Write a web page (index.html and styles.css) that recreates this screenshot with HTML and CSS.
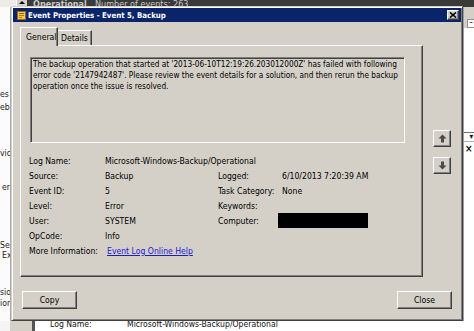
FILE: index.html
```html
<!DOCTYPE html>
<html>
<head>
<meta charset="utf-8">
<title>Event Properties - Event 5, Backup</title>
<link rel="stylesheet" href="styles.css">
</head>
<body>
<div class="screen">
  <div class="bg-top">
    <div class="bg-top-left"></div>
    <div class="scroll-btn"><span class="scroll-arrow"></span></div>
    <div class="bg-top-bar"><span class="bg-op">Operational</span><span class="bg-count">Number of events: 263</span></div>
  </div>
  <div class="bg-middle">
    <div class="bg-left">
      <div class="frag f1">es L</div>
      <div class="frag f2">eb S</div>
      <div class="frag f3">vice</div>
      <div class="frag f4">erv</div>
      <div class="frag f5">Ser</div>
      <div class="frag f6">Exq</div>
      <div class="frag f7">sion</div>
      <div class="frag f8">ion</div>
    </div>
    <div class="bg-left-edge"></div>
    <div class="bg-center"></div>
    <div class="bg-right">
      <div class="bgr-top"><span class="bgr-min">&#8211;</span></div>
      <div class="bgr-white"></div>
      <div class="bgr-drop">&#9662;</div>
      <div class="bgr-x">&#215;</div>
      <div class="bgr-rest"></div>
    </div>
  </div>
  <div class="bg-bottom">
    <div class="bgb-white"></div>
    <div class="bgb-gray"></div>
    <div class="bgb-dark"></div>
    <div class="bgb-row"><span class="bgb-label">Log Name:</span><span>Microsoft-Windows-Backup/Operational</span></div>
  </div>

  <div class="dialog">
    <div class="titlebar">
      <svg class="title-icon" width="9" height="9" viewBox="0 0 9 9">
        <rect x="0.5" y="0.5" width="8" height="8" fill="#f0c850" stroke="#9a6a18"/>
        <rect x="2" y="2" width="5" height="1" fill="#9a6a18"/>
        <rect x="2" y="4" width="5" height="1" fill="#c07820"/>
        <rect x="2" y="6" width="3" height="1" fill="#c07820"/>
      </svg>
      <span class="title-text">Event Properties - Event 5, Backup</span>
      <span class="title-close">
        <svg width="8" height="6" viewBox="0 0 8 6"><path d="M1 0.5 L7 5.5 M7 0.5 L1 5.5" stroke="#000" stroke-width="1.6"/></svg>
      </span>
    </div>
    <div class="dialog-body">
      <div class="tab-area">
        <div class="tabs-col">
          <div class="tabs">
            <div class="tab active">General</div>
            <div class="tab">Details</div>
          </div>
          <div class="panel">
            <div class="message">The backup operation that started at '2013-06-10T12:19:26.203012000Z' has failed with following<br>error code '2147942487'. Please review the event details for a solution, and then rerun the backup<br>operation once the issue is resolved.</div>
            <div class="fields">
              <div class="lbl">Log Name:</div>
              <div class="val span3">Microsoft-Windows-Backup/Operational</div>

              <div class="lbl">Source:</div>
              <div class="val">Backup</div>
              <div class="lbl">Logged:</div>
              <div class="val">6/10/2013 7:20:39 AM</div>

              <div class="lbl">Event ID:</div>
              <div class="val">5</div>
              <div class="lbl">Task Category:</div>
              <div class="val">None</div>

              <div class="lbl">Level:</div>
              <div class="val">Error</div>
              <div class="lbl">Keywords:</div>
              <div class="val"></div>

              <div class="lbl">User:</div>
              <div class="val">SYSTEM</div>
              <div class="lbl">Computer:</div>
              <div class="val"><span class="redacted"></span></div>

              <div class="lbl">OpCode:</div>
              <div class="val span3">Info</div>

              <div class="lbl">More Information:</div>
              <div class="val span3"><a class="link" href="#">Event Log Online Help</a></div>
            </div>
          </div>
        </div>
        <div class="nav-col">
          <div class="nav-btn">
            <svg width="9" height="9" viewBox="0 0 9 9"><path d="M4.5 0.5 L8.5 4.5 H6 V8.5 H3 V4.5 H0.5 Z" fill="#4a4a4a"/></svg>
          </div>
          <div class="nav-btn">
            <svg width="9" height="9" viewBox="0 0 9 9"><path d="M4.5 8.5 L8.5 4.5 H6 V0.5 H3 V4.5 H0.5 Z" fill="#4a4a4a"/></svg>
          </div>
        </div>
      </div>
      <div class="button-row">
        <div class="btn">Copy</div>
        <div class="btn">Close</div>
      </div>
    </div>
  </div>
</div>
</body>
</html>
```

FILE: styles.css
```css
* { box-sizing: border-box; }
html, body { margin: 0; padding: 0; }
body {
  width: 474px;
  height: 331px;
  overflow: hidden;
  background: #ffffff;
  font-family: "DejaVu Sans Condensed", "Liberation Sans", sans-serif;
  font-size: 8.6px;
  color: #000;
}
.screen {
  position: relative;
  width: 474px;
  height: 331px;
  overflow: hidden;
  display: flex;
  flex-direction: column;
}

/* ---------- background window ---------- */
.bg-top { flex: none; height: 7px; display: flex; }
.bg-top-left { width: 16px; background: #ecebe6; }
.scroll-btn {
  width: 11px;
  background: #d4d0c8;
  border-left: 1px solid #fff;
  display: flex;
  justify-content: center;
  padding-top: 1px;
}
.scroll-arrow {
  width: 0; height: 0;
  border-left: 3px solid transparent;
  border-right: 3px solid transparent;
  border-bottom: 3px solid #000;
}
.bg-top-bar {
  flex: 1;
  background: #3a3a3a;
  color: #c8c8c8;
  overflow: hidden;
  padding-left: 6px;
  line-height: 8px;
  font-size: 9px;
  white-space: nowrap;
}
.bg-op { display: inline-block; width: 62px; font-weight: bold; }

.bg-middle { flex: 1; display: flex; min-height: 0; }
.bg-left { width: 10px; background: #fbfbfb; color: #222; white-space: nowrap; }
.frag { height: 10px; line-height: 10px; }
.f1 { margin-top: 82px; }
.f2 { margin-top: 3px; }
.f3 { margin-top: 36px; }
.f4 { margin-top: 24px; padding-left: 2px; }
.f5 { margin-top: 48px; }
.f6 { margin-top: 0; padding-left: 2px; }
.f7 { margin-top: 27px; }
.f8 { margin-top: 1px; }
.bg-left-edge { width: 1px; background: #a8a8a8; }
.bg-center { flex: 1; background: #d4d0c8; }
.bg-right {
  width: 11px;
  display: flex;
  flex-direction: column;
  background: #fff;
  border-left: 1px solid #9c9c9c;
}
.bgr-top { height: 21px; background: #d4d0c8; display: flex; align-items: flex-end; justify-content: flex-end; }
.bgr-min {
  width: 7px; height: 9px; background: #fff;
  border: 1px solid #909090; border-right: none;
  font-size: 8px; line-height: 6px; text-align: center;
}
.bgr-white { height: 104px; }
.bgr-drop {
  height: 10px; border-top: 1px solid #707070; border-bottom: 1px solid #b0b0b0;
  font-size: 8px; line-height: 8px; text-align: right; padding-right: 1px; color: #111;
}
.bgr-x { height: 14px; font-size: 10px; line-height: 14px; font-weight: bold; padding-left: 1px; color: #111; }
.bgr-rest { flex: 1; }

.bg-bottom { flex: none; height: 10px; display: flex; }
.bgb-white { width: 10px; background: #f4f4f4; }
.bgb-gray { width: 22px; background: #d4d0c8; }
.bgb-dark { width: 3px; background: #555; }
.bgb-row {
  flex: 1; background: #fff; padding-left: 15px;
  line-height: 7px; white-space: nowrap; overflow: hidden; color: #111;
}
.bgb-label { display: inline-block; width: 77px; }

/* ---------- dialog ---------- */
.dialog {
  position: absolute;
  left: 11px;
  top: 6px;
  width: 452px;
  height: 315px;
  background: #d4d0c8;
  border: 1px solid;
  border-color: #d4d0c8 #404040 #404040 #d4d0c8;
  box-shadow: inset 1px 1px #fff, inset -1px -1px #808080;
  padding: 1px;
  display: flex;
  flex-direction: column;
}
.titlebar {
  height: 14px;
  background: #0a246a;
  display: flex;
  align-items: center;
  padding-left: 4px;
  padding-right: 2px;
}
.title-icon { flex: none; display: block; }
.title-text {
  flex: 1;
  margin-left: 2px;
  color: #fff;
  font-weight: bold;
  font-size: 7.8px;
  white-space: nowrap;
}
.title-close {
  width: 12px;
  height: 10px;
  background: #d4d0c8;
  border: 1px solid;
  border-color: #fff #404040 #404040 #fff;
  box-shadow: inset -1px -1px #808080;
  display: flex;
  align-items: center;
  justify-content: center;
}
.title-close svg { display: block; }

.dialog-body {
  flex: 1;
  padding: 5px 9px 0 7px;
  display: flex;
  flex-direction: column;
}
.tab-area { display: flex; }
.tabs-col { width: 403px; display: flex; flex-direction: column; }
.tabs { height: 18px; display: flex; align-items: flex-end; }
.tab {
  height: 15px;
  padding: 0 4px;
  line-height: 14px;
  border-top: 1px solid #fff;
  border-left: 1px solid #fff;
  border-right: 1px solid #404040;
  box-shadow: inset -1px 0 #808080;
}
.tab.active {
  position: relative;
  z-index: 1;
  height: 19px;
  margin-bottom: -1px;
  width: 38px;
  padding: 0 0 0 5px;
  line-height: 18px;
  background: #d4d0c8;
}
.tab:not(.active) { width: 34px; padding-left: 3px; border-left: none; }

.panel {
  height: 232px;
  border: 1px solid;
  border-color: #fff #404040 #404040 #fff;
  box-shadow: inset -1px -1px #808080;
  padding: 11px 0 0 8px;
}
.message {
  width: 375px;
  height: 86px;
  margin-left: 1px;
  border: 1px solid;
  border-color: #808080 #fff #fff #808080;
  box-shadow: inset 1px 1px #404040;
  padding: 1px 0 0 2px;
  font-size: 8.2px;
  line-height: 11px;
  white-space: nowrap;
  overflow: hidden;
}
.fields {
  margin-top: 10px;
  display: grid;
  grid-template-columns: 76px 113px 64px 1fr;
  grid-auto-rows: 15px;
  align-items: center;
  white-space: nowrap;
}
.span3 { grid-column: span 3; }
.redacted {
  display: block;
  width: 90px;
  height: 15px;
  margin-left: -4px;
  background: #000;
}
.link { color: #1a1ad0; text-decoration: underline; padding-left: 2px; }

.nav-col {
  margin-left: 10px;
  padding-top: 103px;
  display: flex;
  flex-direction: column;
  gap: 10px;
}
.nav-btn {
  width: 18px;
  height: 17px;
  border: 1px solid;
  border-color: #fff #404040 #404040 #fff;
  box-shadow: inset -1px -1px #808080;
  display: flex;
  align-items: center;
  justify-content: center;
}
.nav-btn svg { display: block; }

.button-row {
  margin-top: 14px;
  margin-left: 2px;
  display: flex;
  justify-content: space-between;
}
.btn {
  width: 55px;
  height: 18px;
  border: 1px solid;
  border-color: #fff #404040 #404040 #fff;
  box-shadow: inset -1px -1px #808080;
  text-align: center;
  line-height: 16px;
}
```
